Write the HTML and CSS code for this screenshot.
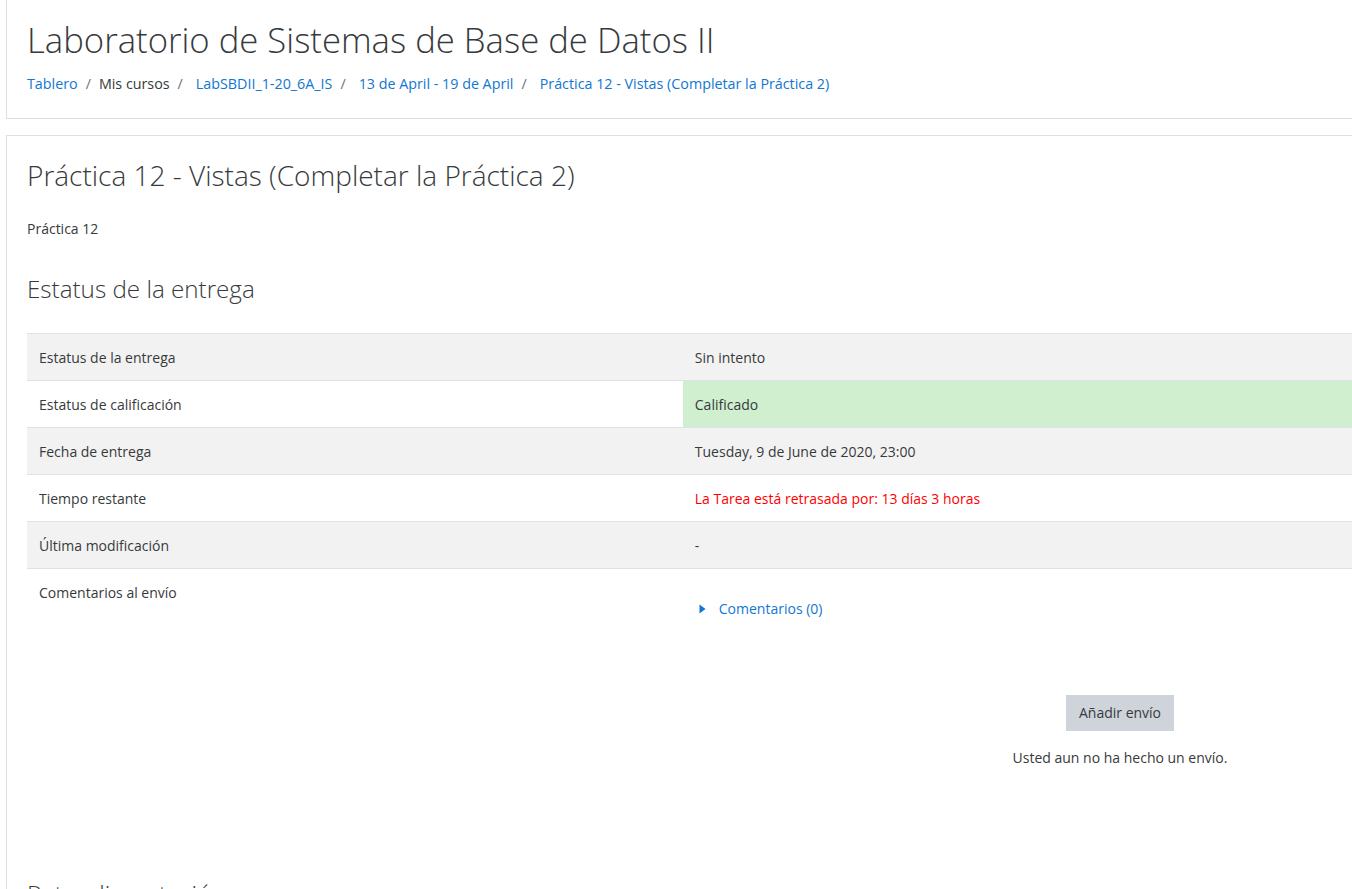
FILE: index.html
```html
<!DOCTYPE html>
<html lang="es">
<head>
<meta charset="utf-8">
<title>Práctica 12 - Vistas (Completar la Práctica 2)</title>
<link rel="stylesheet" href="styles.css">
</head>
<body>
<div class="page">
  <header class="card page-header">
    <h1 class="course-title">Laboratorio de Sistemas de Base de Datos II</h1>
    <nav class="breadcrumb">
      <a class="crumb" href="#">Tablero</a>
      <span class="sep">/</span>
      <span class="crumb plain">Mis cursos</span>
      <span class="sep">/</span>
      <a class="crumb spaced" href="#">LabSBDII_1-20_6A_IS</a>
      <span class="sep">/</span>
      <a class="crumb spaced" href="#">13 de April - 19 de April</a>
      <span class="sep">/</span>
      <a class="crumb spaced" href="#">Práctica 12 - Vistas (Completar la Práctica 2)</a>
    </nav>
  </header>

  <main class="card main-card">
    <h2 class="activity-title">Práctica 12 - Vistas (Completar la Práctica 2)</h2>
    <p class="intro">Práctica 12</p>
    <h3 class="section-title">Estatus de la entrega</h3>
    <table class="status-table">
      <tbody>
        <tr class="odd">
          <td class="c0">Estatus de la entrega</td>
          <td class="c1">Sin intento</td>
        </tr>
        <tr>
          <td class="c0">Estatus de calificación</td>
          <td class="c1 graded">Calificado</td>
        </tr>
        <tr class="odd">
          <td class="c0">Fecha de entrega</td>
          <td class="c1">Tuesday, 9 de June de 2020, 23:00</td>
        </tr>
        <tr>
          <td class="c0">Tiempo restante</td>
          <td class="c1 overdue">La Tarea está retrasada por: 13 días 3 horas</td>
        </tr>
        <tr class="odd">
          <td class="c0">Última modificación</td>
          <td class="c1">-</td>
        </tr>
        <tr class="last">
          <td class="c0">Comentarios al envío</td>
          <td class="c1">
            <a class="comment-link" href="#"><svg class="caret" width="7" height="10" viewBox="0 0 7 10"><path d="M0.5 0.5 L6.5 5 L0.5 9.5 Z" fill="#1177d1"/></svg>Comentarios (0)</a>
          </td>
        </tr>
      </tbody>
    </table>
    <div class="submit-actions">
      <button class="btn" type="button">Añadir envío</button>
      <p class="submit-note">Usted aun no ha hecho un envío.</p>
    </div>
    <h3 class="section-title feedback">Retroalimentación</h3>
  </main>
</div>
</body>
</html>
```

FILE: styles.css
```css
html, body {
  margin: 0;
  padding: 0;
  background: #ffffff;
  overflow: hidden;
}

body {
  font-family: "Open Sans", "Noto Sans", sans-serif;
  font-size: 14px;
  line-height: 22px;
  color: #373a3c;
}

.page {
  width: 2228px;
  padding-left: 6px;
}

.card {
  border: 1px solid #dfdfdf;
  background: #fff;
}

.page-header {
  margin-top: -1px;
  padding: 17px 20px 22px 20px;
  margin-bottom: 16px;
}

.course-title {
  margin: 0 0 11px 0;
  font-size: 34.7px;
  font-weight: 300;
  line-height: 45px;
  color: #373a3c;
}

.breadcrumb {
  display: flex;
  align-items: baseline;
  font-size: 14.3px;
  line-height: 22.5px;
}

.crumb {
  color: #1177d1;
  text-decoration: none;
}

.crumb.plain {
  color: #373a3c;
}

.crumb.spaced {
  margin-left: 5px;
}

.sep {
  color: #6a737b;
  padding: 0 8px;
}

.main-card {
  padding: 23px 20px 20px 20px;
  height: 900px;
}

.activity-title {
  margin: 0 0 26px 0;
  font-size: 28px;
  font-weight: 300;
  line-height: 1.2;
}

.intro {
  margin: 0 0 34px 0;
  font-size: 14px;
}

.section-title {
  margin: 0 0 30px 0;
  font-size: 24.2px;
  font-weight: 300;
  line-height: 29px;
}

.status-table {
  width: 100%;
  border-collapse: collapse;
  margin-top: 0;
}

.status-table td {
  border-top: 1px solid #dee2e6;
  padding: 13px 12px 11px 12px;
  vertical-align: top;
  line-height: 22px;
}

.status-table .c0 {
  width: 30%;
}

.status-table tr.odd td {
  background: #f2f2f2;
}

.status-table td.graded {
  background: #cfefcf;
}

.status-table td.overdue {
  color: #ff0000;
}

.comment-link {
  display: inline-flex;
  align-items: center;
  margin-top: 16px;
  margin-left: 4px;
  color: #1177d1;
  text-decoration: none;
}

.caret {
  margin-right: 13px;
}

.submit-actions {
  margin-top: 64px;
  display: flex;
  flex-direction: column;
  align-items: center;
}

.btn {
  font-family: inherit;
  font-size: 14px;
  line-height: 22px;
  padding: 6px 12px;
  border: 1px solid #ced4da;
  background: #ced4da;
  color: #373a3c;
  border-radius: 0;
}

.submit-note {
  margin: 16px 0 0 0;
}

.feedback {
  margin-top: 110px;
}
```
